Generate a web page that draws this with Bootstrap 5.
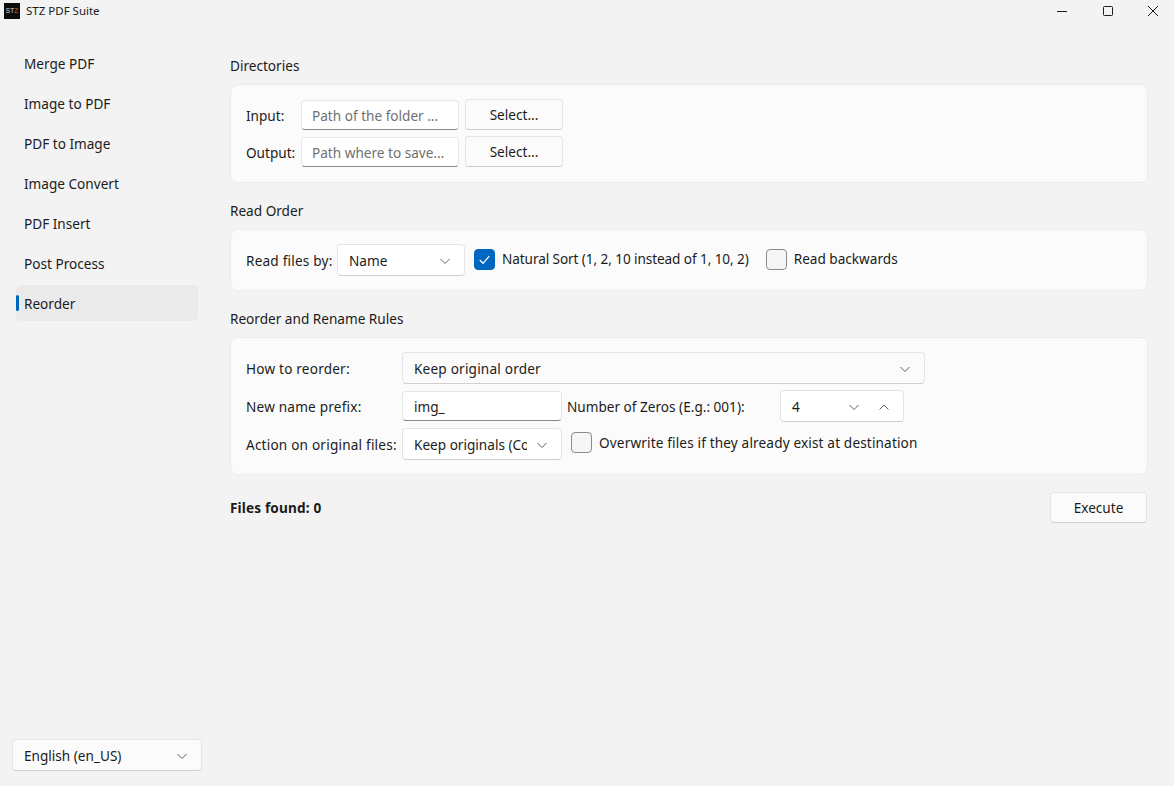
<!DOCTYPE html>
<html lang="en">

<head>
    <meta charset="UTF-8" />
    <meta name="viewport" content="width=device-width, initial-scale=1.0" />
    <title>STZ PDF Suite</title>
    <link href="https://cdn.jsdelivr.net/npm/bootstrap@5.3.0/dist/css/bootstrap.min.css" rel="stylesheet" />
    <style>
        html, body {
            height: 786px;
            overflow: hidden;
        }

        body {
            background-color: #f3f3f3;
            color: #1b1b1b;
            font-family: "Noto Sans", "Open Sans", sans-serif;
            font-size: 13.6px;
            line-height: 20px;
        }

        .title-bar {
            height: 30px;
            padding: 0 0 8px 4px;
            font-size: 11.5px;
        }

        .app-logo {
            width: 16px;
            height: 16px;
            background: #0c0c0c;
            color: #ddd;
            font-size: 6.5px;
            line-height: 16px;
            font-family: "Liberation Sans", sans-serif;
            margin-right: 6px;
        }

        .app-logo span {
            color: #d9652b;
        }

        .win-group {
            margin-right: -2px;
        }

        .win-btn {
            width: 45.500px;
            height: 22px;
        }

        .side-panel {
            width: 214px;
            padding: 15px 12px;
        }

        .side-item {
            height: 36px;
            margin: 0 4px 4px;
            padding: 1px 0 0 8px;
            border-radius: 5px;
            color: #1b1b1b;
            text-decoration: none;
        }

        .side-item.current {
            background: #eaeaea;
        }

        .side-item.current::before {
            content: "";
            position: absolute;
            left: 0;
            top: 10px;
            width: 3px;
            height: 16px;
            border-radius: 2px;
            background: #0067c0;
        }

        .main-pane {
            padding: 25px 26px 0 16px;
        }

        .group-title {
            height: 20px;
            margin: 0 0 9px;
            padding-top: 1px;
            font-size: 13.6px;
            font-weight: 400;
            line-height: 20px;
        }

        .panel-box {
            background: #fbfbfb;
            border: 1px solid #ececec;
            border-radius: 8px;
            padding: 14px 15px;
            margin-bottom: 17px;
        }

        .box-dirs {
            padding-bottom: 15px;
        }

        .line-gap {
            margin-top: 6px;
        }

        .fluent-input.form-control {
            height: 30px;
            padding: 1px 11px 0;
            background: #fff;
            border: 1px solid #e6e6e6;
            border-bottom: 1px solid #8a8a8a;
            border-radius: 4px;
            font-size: 13.6px;
            color: #1b1b1b;
            box-shadow: none;
        }

        .fluent-input.path-input.form-control {
            padding-left: 10px;
        }

        .fluent-input.form-control::placeholder {
            color: #707070;
            opacity: 1;
        }

        .fluent-btn.btn {
            height: 31px;
            padding: 2px 0 0;
            background: #fbfbfb;
            border: 1px solid #e5e5e5;
            border-bottom-color: #cfcfcf;
            border-radius: 4px;
            font-size: 13.6px;
            color: #1b1b1b;
        }

        .fluent-select {
            height: 32px;
            padding: 1px 13px 0 11px;
            background: #fff;
            border: 1px solid #e5e5e5;
            border-bottom-color: #d0d0d0;
            border-radius: 4px;
        }

        .fluent-select.muted {
            background: #fbfbfb;
        }

        .clip-text {
            overflow: hidden;
            white-space: nowrap;
        }

        .chev {
            width: 12px;
            height: 12px;
            flex: none;
            fill: none;
            stroke: #5f5f5f;
            stroke-width: 1;
        }

        .chev-clip {
            margin-left: 9px;
        }

        .spin-arrows {
            gap: 18px;
        }

        .fluent-check.form-check-input {
            width: 21px;
            height: 21px;
            margin: 0 7px 0 0;
            flex: none;
            border: 1px solid #8b8b8b;
            border-radius: 4px;
            background-color: #f6f6f6;
            box-shadow: none;
        }

        .fluent-check.form-check-input:checked {
            background-color: #0067c0;
            border-color: #0067c0;
            background-image: url("data:image/svg+xml,%3csvg xmlns='http://www.w3.org/2000/svg' viewBox='0 0 20 20'%3e%3cpath fill='none' stroke='%23fff' stroke-width='1.300' d='M5 10.500l3.500 3.500L15 6.500'/%3e%3c/svg%3e");
        }

        .lbl-io { width: 55px; padding-top: 2px; }
        .lbl-by { width: 91px; padding-top: 1px; letter-spacing: .2px; }
        .lbl-rules { width: 156px; padding-top: 1px; letter-spacing: .2px; }
        .lbl-zeros { width: 213px; margin-left: 5px; padding-top: 1px; }
        .lbl-found { padding-top: 1px; letter-spacing: .15px; }
        .txt-order { letter-spacing: .2px; }
        .w-path { width: 158px; }
        .w-select-btn { width: 98px; margin-left: 6px; }
        .w-exec-btn { width: 97px; margin-right: 1px; }
        .w-name { width: 128px; }
        .w-order { width: 523px; }
        .w-prefix { width: 160px; }
        .w-spin { width: 124px; }
        .row-footer { margin-top: 1px; }

        .check-row {
            min-height: 0;
            padding: 0;
        }

        .check-natural { margin: 0 0 2px 9px; letter-spacing: -.09px; }
        .check-back { margin: 0 0 2px 17px; }
        .check-over { margin: 0 0 3px 9px; letter-spacing: .15px; }
    </style>
</head>

<body class="d-flex flex-column">
    <!-- title bar -->
    <div class="title-bar d-flex align-items-center justify-content-between flex-shrink-0">
        <div class="d-flex align-items-center">
            <div class="app-logo text-center">ST<span>Z</span></div>
            <span>STZ PDF Suite</span>
        </div>
        <div class="win-group d-flex">
            <div class="win-btn d-flex align-items-center justify-content-center">
                <svg width="10" height="10" viewBox="0 0 10 10"><path d="M0 5.500h10" stroke="#1b1b1b" fill="none" /></svg>
            </div>
            <div class="win-btn d-flex align-items-center justify-content-center">
                <svg width="10" height="10" viewBox="0 0 10 10"><rect x="0.500" y="0.500" width="9" height="9" rx="1" stroke="#1b1b1b" fill="none" /></svg>
            </div>
            <div class="win-btn d-flex align-items-center justify-content-center">
                <svg width="10" height="10" viewBox="0 0 10 10"><path d="M0 0l10 10M10 0L0 10" stroke="#1b1b1b" fill="none" /></svg>
            </div>
        </div>
    </div>

    <div class="d-flex flex-grow-1">
        <!-- sidebar -->
        <div class="side-panel d-flex flex-column justify-content-between flex-shrink-0">
            <div class="d-flex flex-column">
                <a class="side-item d-flex align-items-center" href="#">Merge PDF</a>
                <a class="side-item d-flex align-items-center" href="#">Image to PDF</a>
                <a class="side-item d-flex align-items-center" href="#">PDF to Image</a>
                <a class="side-item d-flex align-items-center" href="#">Image Convert</a>
                <a class="side-item d-flex align-items-center" href="#">PDF Insert</a>
                <a class="side-item d-flex align-items-center" href="#">Post Process</a>
                <a class="side-item current d-flex align-items-center position-relative" href="#">Reorder</a>
            </div>
            <div class="fluent-select muted d-flex align-items-center justify-content-between">
                <span>English (en_US)</span>
                <svg class="chev" viewBox="0 0 12 12"><path d="M1.500 4l4.500 4.500L10.500 4" /></svg>
            </div>
        </div>

        <!-- main -->
        <div class="main-pane flex-grow-1">
            <h6 class="group-title">Directories</h6>
            <div class="panel-box box-dirs">
                <div class="d-flex align-items-center">
                    <div class="lbl-io">Input:</div>
                    <input class="fluent-input path-input form-control w-path" placeholder="Path of the folder ...">
                    <button class="fluent-btn btn w-select-btn">Select...</button>
                </div>
                <div class="d-flex align-items-center line-gap">
                    <div class="lbl-io">Output:</div>
                    <input class="fluent-input path-input form-control w-path" placeholder="Path where to save...">
                    <button class="fluent-btn btn w-select-btn">Select...</button>
                </div>
            </div>

            <h6 class="group-title">Read Order</h6>
            <div class="panel-box d-flex align-items-center">
                <div class="lbl-by">Read files by:</div>
                <div class="fluent-select d-flex align-items-center justify-content-between w-name">
                    <span>Name</span>
                    <svg class="chev" viewBox="0 0 12 12"><path d="M1.500 4l4.500 4.500L10.500 4" /></svg>
                </div>
                <div class="form-check check-row d-flex align-items-center check-natural">
                    <input class="fluent-check form-check-input" type="checkbox" checked>
                    <label class="form-check-label">Natural Sort (1, 2, 10 instead of 1, 10, 2)</label>
                </div>
                <div class="form-check check-row d-flex align-items-center check-back">
                    <input class="fluent-check form-check-input" type="checkbox">
                    <label class="form-check-label">Read backwards</label>
                </div>
            </div>

            <h6 class="group-title">Reorder and Rename Rules</h6>
            <div class="panel-box">
                <div class="d-flex align-items-center">
                    <div class="lbl-rules">How to reorder:</div>
                    <div class="fluent-select muted d-flex align-items-center justify-content-between w-order">
                        <span class="txt-order">Keep original order</span>
                        <svg class="chev" viewBox="0 0 12 12"><path d="M1.500 4l4.500 4.500L10.500 4" /></svg>
                    </div>
                </div>
                <div class="d-flex align-items-center line-gap">
                    <div class="lbl-rules">New name prefix:</div>
                    <input class="fluent-input form-control w-prefix" value="img_">
                    <div class="lbl-zeros">Number of Zeros (E.g.: 001):</div>
                    <div class="fluent-select d-flex align-items-center justify-content-between w-spin">
                        <span>4</span>
                        <div class="spin-arrows d-flex">
                            <svg class="chev" viewBox="0 0 12 12"><path d="M1.500 4l4.500 4.500L10.500 4" /></svg>
                            <svg class="chev" viewBox="0 0 12 12"><path d="M1.500 8.500L6 4l4.500 4.500" /></svg>
                        </div>
                    </div>
                </div>
                <div class="d-flex align-items-center line-gap">
                    <div class="lbl-rules">Action on original files:</div>
                    <div class="fluent-select d-flex align-items-center justify-content-between w-prefix">
                        <span class="clip-text">Keep originals (Copy)</span>
                        <svg class="chev chev-clip" viewBox="0 0 12 12"><path d="M1.500 4l4.500 4.500L10.500 4" /></svg>
                    </div>
                    <div class="form-check check-row d-flex align-items-center check-over">
                        <input class="fluent-check form-check-input" type="checkbox">
                        <label class="form-check-label">Overwrite files if they already exist at destination</label>
                    </div>
                </div>
            </div>

            <div class="row-footer d-flex align-items-center justify-content-between">
                <div class="lbl-found fw-bold">Files found: 0</div>
                <button class="fluent-btn btn w-exec-btn">Execute</button>
            </div>
        </div>
    </div>

    <script src="https://cdn.jsdelivr.net/npm/bootstrap@5.3.0/dist/js/bootstrap.bundle.min.js"></script>
</body>

</html>
